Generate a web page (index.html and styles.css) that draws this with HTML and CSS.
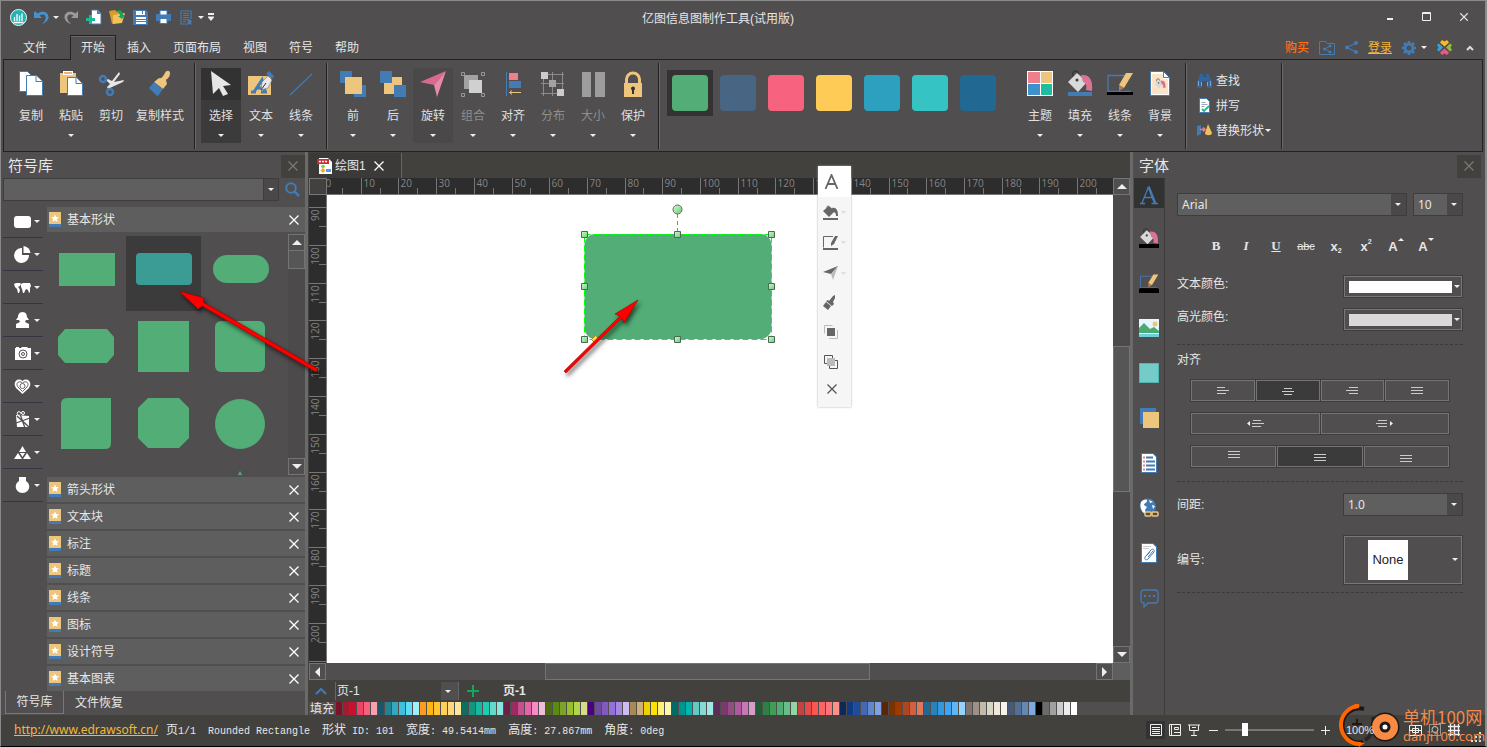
FILE: index.html
```html
<!DOCTYPE html>
<html lang="zh-CN">
<head>
<meta charset="utf-8">
<title>亿图信息图制作工具(试用版)</title>
<link rel="stylesheet" href="styles.css">
</head>
<body>
<svg class="defs" aria-hidden="true">
  <defs>
    <linearGradient id="g-handle" x1="0" y1="0" x2="1" y2="1"><stop offset="0" stop-color="#d8f8d8"/><stop offset="1" stop-color="#62cf6c"/></linearGradient>
    <symbol id="i-x" viewBox="0 0 12 12"><path d="M1.500 1.500l9 9M10.500 1.500l-9 9" fill="none" stroke="currentColor" stroke-width="1.300"/></symbol>
    <symbol id="i-lib" viewBox="0 0 12 15"><path fill="#eec57c" d="M0 0h12v12H0z"/><path fill="#437bb5" d="M0 12h12v3H0z"/><path fill="#fff" d="M6 2.500l1.200 2.400 2.700.3-2 1.800.6 2.700L6 8.400 3.500 9.700l.6-2.700-2-1.800 2.700-.3z"/></symbol>
    <symbol id="i-bucket" viewBox="0 0 26 27"><path d="M7 8c-3-4-1-7 2-7s3 4 2 9" fill="none" stroke="#35393b" stroke-width="1.400"/><path fill="#d9d9d9" d="M10 3l10 9-9 10L1 12z"/><circle cx="10" cy="10" r="1.500" fill="#3c3c3c"/><path fill="#dc7393" d="M14 5c9-1 12 5 11 16l-6-1c1-4 0-7-3-8z"/></symbol>
    <symbol id="i-pen" viewBox="0 0 26 25"><path d="M18 4.500H1v16h23" fill="none" stroke="#437bb5" stroke-width="1.300"/><path fill="#eec57c" d="M19 2h7l-9 15-5-3z"/><path fill="#b07958" d="M12 14l5 3-5 3z"/><path fill="#000" d="M0 21h26v3H0z"/></symbol>
    <symbol id="i-brush" viewBox="0 0 22 27"><path fill="#eec57c" d="M16 3c1-3 5-3 5 0 0 4-2 5-4 7l1 4-4 5-9-7 5-4c3 1 4-2 6-5z"/><path fill="#437bb5" d="M5 12l9 7-5 7-2-1-7-7z"/></symbol>
    <symbol id="i-lines" viewBox="0 0 12 8"><path d="M0 .5h12M0 3.500h12M0 6.500h12" stroke="#ccc" fill="none"/></symbol>
  </defs>
</svg>

<div class="app">
  <header class="titlebar">
    <div class="quick">
      <svg class="q-logo" width="17" height="17" viewBox="0 0 17 17"><circle cx="8.500" cy="8.500" r="8" fill="#23b3b3" stroke="#dff"/><path d="M4.500 8v4M7 5v7M9.500 6.500V12M12 4.500V12M3.500 13.500h10" stroke="#fff" stroke-width="1.300" fill="none"/></svg>
      <button class="q" aria-label="撤销"><svg width="15" height="15" viewBox="0 0 15 15"><path d="M1 2v5h5" fill="none" stroke="#4293cf" stroke-width="2"/><path d="M1 1v7h7L5.500 5.500c4-2.500 7 0 6 3.500-.5 2-2 3.500-3.500 5 4-1.500 6.500-3.500 6.500-7 0-5-6-7-11-3.500z" fill="#4293cf"/></svg></button>
      <i class="caret"></i>
      <button class="q" aria-label="重做"><svg width="15" height="15" viewBox="0 0 15 15"><path d="M14 1v7H7l2.500-2.500c-4-2.500-7 0-6 3.500.5 2 2 3.500 3.500 5C3 12.500.5 10.500.5 7c0-5 6-7 11-3.500z" fill="#9a9a9a"/></svg></button>
      <button class="q" aria-label="新建"><svg width="16" height="16" viewBox="0 0 16 16"><path fill="#fff" stroke="#437bb5" d="M5.500 1h6l3.500 3.500V15H5.500z"/><path fill="#437bb5" d="M11 1l4 4h-4z"/><path fill="#1fb896" d="M3 6h3v3h3v3H6v3H3v-3H0V9h3z"/></svg></button>
      <button class="q" aria-label="打开"><svg width="16" height="16" viewBox="0 0 16 16"><path fill="#d99b2b" d="M0 2l6-1 2 2 4-1 1 9-10 4z"/><path fill="#f1c15f" d="M4 6l12-2-3 10-9 1z"/><path fill="#13a55a" d="M7 2c4-2 7 0 7 4h2l-3 4-4-3h2c0-2-1-4-4-5z"/></svg></button>
      <button class="q" aria-label="保存"><svg width="15" height="15" viewBox="0 0 15 15"><path fill="#437bb5" d="M0 0h13l2 2v13H0z"/><path fill="#fff" d="M3 1h9v4H3zM3 7h10v7H3z"/><path d="M3 9.500h10M3 11.500h10M9.500 1v3" stroke="#437bb5"/></svg></button>
      <button class="q" aria-label="打印"><svg width="15" height="14" viewBox="0 0 15 14"><path fill="#437bb5" d="M0 4h15v7H0z"/><path fill="#fff" stroke="#437bb5" d="M4 .5h7V5H4zM4 8.500h7v5H4z"/></svg></button>
      <button class="q" aria-label="导出"><svg width="13" height="15" viewBox="0 0 13 15"><path fill="none" stroke="#437bb5" stroke-width="1.200" d="M8 14H1V1h10v8M3 3.500h6M3 5.500h6M3 7.500h6M3 9.500h4M3 11.500h3"/><path fill="#437bb5" d="M9 8l1 2 2 1-1 2 2 2-3-1-3 1 1-3-1-1z"/></svg></button>
      <i class="caret"></i>
      <button class="q q-more" aria-label="更多"><svg width="6" height="8" viewBox="0 0 6 8"><path fill="#eee" d="M0 0h6v2H0zM0 3.500h6v1L3 8 0 4.500z"/></svg></button>
    </div>
    <h1 class="title">亿图信息图制作工具(试用版)</h1>
    <div class="winbtns">
      <button aria-label="最小化"><svg width="10" height="10" viewBox="0 0 10 10"><path fill="#eee" d="M2 6h6v2H2z"/></svg></button>
      <button aria-label="最大化"><svg width="10" height="10" viewBox="0 0 10 10"><path fill="none" stroke="#eee" d="M.5 .5h8v8h-8zM.5 1.500h8"/></svg></button>
      <button aria-label="关闭"><svg width="10" height="10"><use href="#i-x"/></svg></button>
    </div>
  </header>

  <nav class="tabs">
    <button class="tab tab-file">文件</button>
    <button class="tab is-active">开始</button>
    <button class="tab">插入</button>
    <button class="tab">页面布局</button>
    <button class="tab">视图</button>
    <button class="tab">符号</button>
    <button class="tab">帮助</button>
    <div class="account">
      <a class="buy" href="#">购买</a>
      <button aria-label="共享文件夹"><svg width="16" height="14" viewBox="0 0 16 14"><path d="M.5 13.500V.5H7l1 2h7.500v11z" fill="none" stroke="#437bb5"/><path d="M11 5L6 8l5 3" fill="none" stroke="#437bb5"/><circle cx="11" cy="5" r="1.500" fill="#437bb5"/><circle cx="5.500" cy="8" r="1.500" fill="#437bb5"/><circle cx="11" cy="11" r="1.500" fill="#437bb5"/></svg></button>
      <button aria-label="分享"><svg width="13" height="13" viewBox="0 0 13 13"><path d="M11 2L2 6.500 11 11" fill="none" stroke="#437bb5" stroke-width="1.200"/><circle cx="11" cy="2" r="2" fill="#437bb5"/><circle cx="2" cy="6.500" r="2" fill="#437bb5"/><circle cx="11" cy="11" r="2" fill="#437bb5"/></svg></button>
      <a class="login" href="#">登录</a>
      <button aria-label="设置"><svg width="14" height="14" viewBox="0 0 14 14"><circle cx="7" cy="7" r="4" fill="none" stroke="#437bb5" stroke-width="3"/><path d="M7 0v2.500M7 11.500V14M0 7h2.500M11.500 7H14M2 2l2 2M10 10l2 2M12 2l-2 2M4 10l-2 2" stroke="#437bb5" stroke-width="2.500"/></svg></button>
      <i class="caret"></i>
      <button class="clover" aria-label="社区"><svg width="15" height="15" viewBox="0 0 15 15"><path fill="#f9b92c" d="M7.500 6.500L3 2.500 5 0l2.500 1.500L10 0l2 2.500z"/><path fill="#e65a8a" d="M7.500 8.500L3 12.500 5 15l2.500-1.500L10 15l2-2.500z"/><path fill="#35a3d7" d="M6 7.500L2 3.500 0 5l1.500 2.500L0 10l2 1.500z"/><path fill="#8fbf3c" d="M9 7.500l4-4L15 5l-1.500 2.500L15 10l-2 1.500z"/></svg></button>
      <button aria-label="折叠功能区"><svg width="8" height="6" viewBox="0 0 8 6"><path d="M1 5l3-3 3 3" fill="none" stroke="#ddd" stroke-width="2"/></svg></button>
    </div>
  </nav>

  <section class="ribbon">
    <div class="group">
      <button class="rb"><svg width="26" height="27" viewBox="0 0 26 27"><g fill="#fff" stroke="#437bb5"><path d="M1.500 1.500h8l5 5v15h-13z"/><path d="M8.500 5.500h10l6 6v14h-16z"/><path d="M18 5.500v6h6.500"/></g></svg><span>复制</span></button>
      <button class="rb"><svg width="26" height="27" viewBox="0 0 26 27"><path fill="#eec57c" d="M2 3h16v20H2z"/><path fill="#fff" d="M5 1h10v4H5z"/><path fill="#f3b179" d="M6 2h8v2H6z"/><g fill="#fff" stroke="#437bb5"><path d="M9.500 7.500h9l6 6v12h-15z"/><path d="M18 7.500v6h6"/></g></svg><span>粘贴</span><i class="caret"></i></button>
      <button class="rb"><svg width="26" height="27" viewBox="0 0 26 27"><path fill="#e8e8e8" d="M21 2l1 2-6 8 10-2-1 2-11 5-4 2-1-2 3-3-4-4 2-1 4 2z"/><circle cx="5" cy="9" r="3" fill="none" stroke="#437bb5" stroke-width="2.500"/><circle cx="12" cy="22" r="3" fill="none" stroke="#437bb5" stroke-width="2.500"/></svg><span>剪切</span></button>
      <button class="rb rb-wide"><svg width="22" height="27"><use href="#i-brush"/></svg><span>复制样式</span></button>
    </div>
    <div class="group">
      <button class="rb is-on"><svg width="26" height="27" viewBox="0 0 26 27"><path fill="#e6e6e6" d="M3 1l20 14-8 1 5 8-5 2-4-8-6 6z"/></svg><span>选择</span><i class="caret"></i></button>
      <button class="rb"><svg width="26" height="27" viewBox="0 0 26 27"><path fill="#eec57c" d="M0 6h23v19H0z"/><path fill="none" stroke="#437bb5" stroke-width="3" d="M3 22h5M6 22l8-12 3 12M9 18h8M13 22h6"/><path fill="#e9e9e9" stroke="#777" stroke-width=".6" d="M13 20l1-8 6-6 4 4-4 8z"/><path d="M13 20l5-7" stroke="#333"/><path fill="#437bb5" d="M18 4l3-3 5 5-2 3z"/></svg><span>文本</span><i class="caret"></i></button>
      <button class="rb"><svg width="26" height="27" viewBox="0 0 26 27"><path d="M2 25L24 4" stroke="#437bb5" stroke-width="1.200"/></svg><span>线条</span><i class="caret"></i></button>
    </div>
    <div class="group">
      <button class="rb"><svg width="26" height="27" viewBox="0 0 26 27"><path fill="#437bb5" d="M0 1h12v12H0zM14 15h12v12H14z"/><path fill="#eec57c" d="M5 7h17v17H5z"/></svg><span>前</span><i class="caret"></i></button>
      <button class="rb"><svg width="26" height="27" viewBox="0 0 26 27"><path fill="#eec57c" d="M4 7h18v17H4z"/><path fill="#437bb5" d="M0 1h12v12H0zM14 15h12v12H14z"/></svg><span>后</span><i class="caret"></i></button>
      <button class="rb is-hover"><svg width="26" height="27" viewBox="0 0 26 27"><path fill="#d96a8e" d="M0 12L26 1 14 15z"/><path fill="#e78ba8" d="M26 1l-9 26-3-12z"/></svg><span>旋转</span><i class="caret"></i></button>
      <button class="rb" disabled><svg width="26" height="27" viewBox="0 0 26 27"><path fill="#a2a2a2" d="M4 5h14v14H4z"/><path fill="#d0d0d0" d="M9 10h13v13H9z"/><g fill="none" stroke="#999"><path d="M1.500 2.500h3v3h-3zM21.500 2.500h3v3h-3zM1.500 23.500h3v3h-3zM21.500 23.500h3v3h-3z"/></g></svg><span>组合</span><i class="caret"></i></button>
      <button class="rb"><svg width="26" height="27" viewBox="0 0 26 27"><path d="M6.500 2v24" stroke="#437bb5"/><path fill="#f07f8d" d="M9 3h9v7H9z"/><path fill="#437bb5" d="M9 11h12v7H9z"/><path fill="none" stroke="#eec57c" d="M21 22.500H10M12 20.500l-2.500 2 2.500 2"/></svg><span>对齐</span><i class="caret"></i></button>
      <button class="rb" disabled><svg width="26" height="27" viewBox="0 0 26 27"><path d="M1 4.500h23M1 13.500h23M1 23.500h23M3.500 2v24M12.500 2v24M22.500 2v24" stroke="#8c8c8c"/><path fill="#ccc" d="M1 2h7v7H1zM17 19h7v7h-7z"/><path fill="#a2a2a2" d="M9 10h7v7H9z"/></svg><span>分布</span><i class="caret"></i></button>
      <button class="rb" disabled><svg width="26" height="27" viewBox="0 0 26 27"><path fill="#9d9d9d" d="M2 2h9v25H2zM15 2h10v25H15z"/></svg><span>大小</span><i class="caret"></i></button>
      <button class="rb"><svg width="26" height="27" viewBox="0 0 26 27"><path d="M6.500 13V9.500a6.500 6.500 0 0 1 13 0V13" fill="none" stroke="#eec57c" stroke-width="3"/><path fill="#eec57c" d="M4 13h18v14H4z"/><path d="M13 17v7" stroke="#333" stroke-width="2"/><circle cx="13" cy="18.500" r="2" fill="#333"/></svg><span>保护</span><i class="caret"></i></button>
    </div>
    <div class="group styles">
      <button class="style s1 is-on" aria-label="样式 1"><i></i></button>
      <button class="style s2" aria-label="样式 2"><i></i></button>
      <button class="style s3" aria-label="样式 3"><i></i></button>
      <button class="style s4" aria-label="样式 4"><i></i></button>
      <button class="style s5" aria-label="样式 5"><i></i></button>
      <button class="style s6" aria-label="样式 6"><i></i></button>
      <button class="style s7" aria-label="样式 7"><i></i></button>
      <div class="themes">
        <button class="rb"><svg width="26" height="27" viewBox="0 0 26 27"><path fill="#fff" d="M0 1h26v25H0z"/><path fill="#f07f8d" d="M1 2h12v11H1z"/><path fill="#eec57c" d="M14 2h11v11H14z"/><path fill="#3f91cc" d="M1 14h12v11H1z"/><path fill="#1fbc9f" d="M14 14h11v11H14z"/></svg><span>主题</span><i class="caret"></i></button>
        <button class="rb"><svg width="26" height="27" viewBox="0 0 26 27"><use href="#i-bucket" width="26" height="27"/><path fill="#437bb5" d="M1 22h24v4H1z"/></svg><span>填充</span><i class="caret"></i></button>
        <button class="rb"><svg width="26" height="27" viewBox="0 0 26 25"><use href="#i-pen" width="26" height="25"/></svg><span>线条</span><i class="caret"></i></button>
        <button class="rb"><svg width="26" height="27" viewBox="0 0 26 27"><path fill="#fff" stroke="#437bb5" d="M3.500 1.500h13l6 6v18h-19z"/><path fill="#fbe3c8" d="M5 4h11v5h5v15H5z"/><path d="M16.500 1.500v6h6" fill="none" stroke="#437bb5"/><use href="#i-bucket" x="7" y="8" width="12" height="13"/></svg><span>背景</span><i class="caret"></i></button>
      </div>
    </div>
    <div class="group stack">
      <button><svg width="15" height="15" viewBox="0 0 15 15"><path fill="#2f66a0" d="M3 1h3v3h3V1h3l1 4 2 4v6h-5V8H5v7H0V9l2-4z"/><path d="M1.500 8v5M4.500 9v4M10.500 9v4M13.500 8v5" stroke="#9fbfe0" stroke-width=".7"/></svg>查找</button>
      <button><svg width="15" height="15" viewBox="0 0 15 15"><path fill="#fff" stroke="#437bb5" d="M2.500.5h7l3 3v11h-10z"/><path d="M4.500 4.500h4M4.500 6.500h6M4.500 8.500h3" stroke="#9ab"/><path d="M5 11l2 2 5-5" stroke="#1fb896" stroke-width="1.800" fill="none"/></svg>拼写</button>
      <button><svg width="15" height="15" viewBox="0 0 15 15"><path fill="#437bb5" d="M0 3l4-1v9l-4 2z"/><path d="M3 6.500h5M6 4.500l2 2-2 2" stroke="#f07f8d" stroke-width="1.500" fill="none"/><path fill="#eec057" d="M11 1l4 9c0 3-7 3-7 0z"/></svg>替换形状<i class="caret"></i></button>
    </div>
  </section>

  <main class="work">
    <aside class="library">
      <div class="panel-head"><h2>符号库</h2><button class="panel-close" aria-label="关闭符号库"><svg width="12" height="12"><use href="#i-x"/></svg></button></div>
      <div class="search">
        <input type="text" aria-label="搜索符号"><button class="search-drop" aria-label="搜索历史"><i class="caret"></i></button>
        <button class="search-go" aria-label="搜索"><svg width="15" height="15" viewBox="0 0 15 15"><circle cx="6" cy="6" r="4.800" fill="none" stroke="#437bb5" stroke-width="2"/><path d="M9.500 9.500L14 14" stroke="#437bb5" stroke-width="2.500"/></svg></button>
      </div>
      <div class="lib-body">
        <div class="cats">
          <button aria-label="形状"><svg width="17" height="17" viewBox="0 0 17 17"><rect y="3" width="17" height="12" rx="3" fill="#fff"/></svg><i class="caret"></i></button>
          <button aria-label="图表"><svg width="17" height="17" viewBox="0 0 17 17"><path fill="#fff" d="M8 2v7h7a7.500 7.500 0 1 1-7-7z"/><path fill="#fff" d="M9.500 0a7.500 7.500 0 0 1 7 7h-7z"/></svg><i class="caret"></i></button>
          <button aria-label="地图"><svg width="17" height="17" viewBox="0 0 17 17"><path fill="#fff" d="M0 5l2-1h4l1 1-1 2-2 1 1 1 1 2-1 3H4l-1-4-2-2zM7 5l2-1 7 0 1 3-1 2 0 4-1 1-1-3-2-1-1 2-1 2H9L8 10 7 8z"/></svg><i class="caret"></i></button>
          <button aria-label="人物"><svg width="17" height="17" viewBox="0 0 17 17"><path fill="#fff" d="M8.500 0C12 0 13 3 13 5l2 3h-3l-1 2 4 2v4H2v-4l4-2-1-2H2l2-3c0-2 1-5 4.500-5z"/></svg><i class="caret"></i></button>
          <button aria-label="科技"><svg width="17" height="17" viewBox="0 0 17 17"><path fill="#fff" d="M2 2h3v1h2l1-1h5l1 1h3v12H1V3h1z"/><circle cx="9" cy="9" r="4" fill="none" stroke="#555"/><circle cx="9" cy="9" r="1.500" fill="none" stroke="#555"/></svg><i class="caret"></i></button>
          <button aria-label="健康"><svg width="17" height="17" viewBox="0 0 17 17"><path fill="#fff" d="M8.500 16L2 10C-2 4 4-1 8.500 3 13-1 19 4 15 10z"/><path fill="none" stroke="#666" d="M8.500 13.500L4 9c-3-4 1-7 4.500-4C12 2 16 5 13 9z"/><circle cx="8.500" cy="8" r="2.500" fill="none" stroke="#666"/></svg><i class="caret"></i></button>
          <button aria-label="礼物"><svg width="17" height="17" viewBox="0 0 17 17"><path fill="#fff" d="M2 4l13 1v11H3z"/><circle cx="5" cy="2.500" r="1.800" fill="none" stroke="#fff"/><circle cx="9" cy="2" r="1.500" fill="none" stroke="#fff"/><path d="M6 3l5 14M2 12L16 7M3 5l12 11" stroke="#504e4f" stroke-width="1.300"/></svg><i class="caret"></i></button>
          <button aria-label="三角"><svg width="17" height="17" viewBox="0 0 17 17"><path fill="#fff" d="M8.500 2L12 8H5zM4 9l4 6H0zM13 9l4 6H9zM6 9h5l-2.500 4z"/></svg><i class="caret"></i></button>
          <button aria-label="灯泡"><svg width="17" height="17" viewBox="0 0 17 17"><path fill="#fff" d="M5 0h7v4c6 4 3 12-3.500 12S-1 8 5 4z"/></svg><i class="caret"></i></button>
        </div>
        <div class="libs">
          <div class="lib"><svg width="12" height="15"><use href="#i-lib"/></svg><span>基本形状</span><button aria-label="关闭基本形状"><svg width="12" height="12"><use href="#i-x"/></svg></button></div>
          <div class="shapes">
            <div class="shape-grid">
              <button aria-label="矩形"><svg viewBox="0 0 75 75"><path d="M10 17h56v33H10z"/></svg></button>
              <button class="is-on" aria-label="圆角矩形"><svg viewBox="0 0 75 75"><rect x="10" y="17" width="56" height="32" rx="4"/></svg></button>
              <button aria-label="胶囊形"><svg viewBox="0 0 75 75"><rect x="10" y="19" width="56" height="28" rx="14"/></svg></button>
              <button aria-label="切角矩形"><svg viewBox="0 0 75 75"><path d="M16 16h42l7 8v18l-7 8H16l-7-8V24z"/></svg></button>
              <button aria-label="正方形"><svg viewBox="0 0 75 75"><path d="M12 8h51v51H12z"/></svg></button>
              <button aria-label="圆角正方形"><svg viewBox="0 0 75 75"><rect x="12" y="8" width="50" height="51" rx="6"/></svg></button>
              <button aria-label="对角圆角"><svg viewBox="0 0 75 75"><path d="M18 8h44v45q0 6-6 6H12V14q0-6 6-6z"/></svg></button>
              <button aria-label="八边形"><svg viewBox="0 0 75 75"><path d="M22 8h31l10 10v30L53 58H22L12 48V18z"/></svg></button>
              <button aria-label="圆形"><svg viewBox="0 0 75 75"><circle cx="37" cy="34" r="25"/></svg></button>
              <i></i><i></i>
              <button aria-label="三角形"><svg viewBox="0 0 75 75"><path d="M37 4l30 60H7z"/></svg></button>
            </div>
            <div class="vbar">
              <button class="sb" aria-label="向上"><i class="up"></i></button><span class="thumb lib-thumb"></span><span class="fill"></span><button class="sb" aria-label="向下"><i class="down"></i></button>
            </div>
          </div>
          <div class="lib"><svg width="12" height="15"><use href="#i-lib"/></svg><span>箭头形状</span><button aria-label="关闭箭头形状"><svg width="12" height="12"><use href="#i-x"/></svg></button></div>
          <div class="lib"><svg width="12" height="15"><use href="#i-lib"/></svg><span>文本块</span><button aria-label="关闭文本块"><svg width="12" height="12"><use href="#i-x"/></svg></button></div>
          <div class="lib"><svg width="12" height="15"><use href="#i-lib"/></svg><span>标注</span><button aria-label="关闭标注"><svg width="12" height="12"><use href="#i-x"/></svg></button></div>
          <div class="lib"><svg width="12" height="15"><use href="#i-lib"/></svg><span>标题</span><button aria-label="关闭标题"><svg width="12" height="12"><use href="#i-x"/></svg></button></div>
          <div class="lib"><svg width="12" height="15"><use href="#i-lib"/></svg><span>线条</span><button aria-label="关闭线条"><svg width="12" height="12"><use href="#i-x"/></svg></button></div>
          <div class="lib"><svg width="12" height="15"><use href="#i-lib"/></svg><span>图标</span><button aria-label="关闭图标"><svg width="12" height="12"><use href="#i-x"/></svg></button></div>
          <div class="lib"><svg width="12" height="15"><use href="#i-lib"/></svg><span>设计符号</span><button aria-label="关闭设计符号"><svg width="12" height="12"><use href="#i-x"/></svg></button></div>
          <div class="lib"><svg width="12" height="15"><use href="#i-lib"/></svg><span>基本图表</span><button aria-label="关闭基本图表"><svg width="12" height="12"><use href="#i-x"/></svg></button></div>
        </div>
      </div>
      <div class="lib-tabs"><button class="is-active">符号库</button><button>文件恢复</button></div>
    </aside>

    <section class="editor">
      <div class="doc-tabs">
        <div class="doc-tab"><svg width="15" height="16" viewBox="0 0 15 16"><path fill="#fff" d="M2 0h9l4 4v12H2z"/><path fill="#c5303a" d="M0 1h12v5H0z"/><path d="M2 3.500h2M5 3.500h2M8 3.500h2" stroke="#fff" stroke-width="1.500"/><circle cx="6" cy="8.500" r="1.800" fill="#8fc843"/><path fill="#4aa0f0" d="M9 11h5v3H9z"/><path fill="#f5a623" d="M6 10l2.500 2.500L6 15l-2.500-2.500z"/></svg><span>绘图1</span><button aria-label="关闭绘图1"><svg width="12" height="12"><use href="#i-x"/></svg></button></div>
      </div>
      <div class="sheet">
        <div class="corner"></div>
        <svg class="ruler-h" id="ruler-h"></svg>
        <svg class="ruler-v" id="ruler-v"></svg>
        <div class="stage">
          <svg class="drawing" width="260" height="170" viewBox="0 0 260 170">
            <rect x="27.500" y="30" width="187" height="105" rx="11" fill="#52ad77"/>
            <rect x="27.500" y="30.500" width="187" height="105" fill="none" stroke="#0f0" stroke-dasharray="6 3"/>
            <path d="M120.500 10v20" stroke="#0e0" stroke-dasharray="4 3"/>
            <circle cx="120.500" cy="5.500" r="4.500" fill="url(#g-handle)" stroke="#666"/>
            <path d="M38.500 131.500l4 4-4 4-4-4z" fill="#fd4" stroke="#a82"/>
            <g fill="url(#g-handle)" stroke="#4a6a52">
              <path d="M24.500 27.500h6v6h-6z"/><path d="M117.500 27.500h6v6h-6z"/><path d="M211.500 27.500h6v6h-6z"/>
              <path d="M24.500 79.500h6v6h-6z"/><path d="M211.500 79.500h6v6h-6z"/>
              <path d="M24.500 132.500h6v6h-6z"/><path d="M117.500 132.500h6v6h-6z"/><path d="M211.500 132.500h6v6h-6z"/>
            </g>
          </svg>
        </div>
        <div class="vbar sheet-v">
          <button class="sb" aria-label="向上"><i class="up"></i></button><span class="gap-a"></span><span class="thumb"></span><span class="gap-b"></span><button class="sb" aria-label="向下"><i class="down"></i></button>
        </div>
        <div class="hbar">
          <button class="sb" aria-label="向左"><i class="left"></i></button><span class="gap-a"></span><span class="thumb"></span><span class="gap-b"></span><button class="sb" aria-label="向右"><i class="right"></i></button>
        </div>
        <div class="bar-corner"></div>
      </div>
      <div class="pagebar">
        <button class="pg-up" aria-label="展开"><svg width="12" height="8" viewBox="0 0 12 8"><path d="M1 7l5-5 5 5" fill="none" stroke="#437bb5" stroke-width="2"/></svg></button>
        <div class="pg-pick"><select aria-label="页面"><option>页-1</option></select><i class="caret"></i></div>
        <button class="pg-add" aria-label="添加页"><svg width="12" height="12" viewBox="0 0 12 12"><path d="M6 0v12M0 6h12" stroke="#12a85a" stroke-width="2"/></svg></button>
        <button class="pg-tab">页-1</button>
      </div>
      <div class="palette"><span>填充</span><div class="chips" id="chips"></div></div>

      <div class="floatbar">
        <button aria-label="字体"><svg width="15" height="15" viewBox="0 0 15 15"><path d="M1.500 15L7.500 1l6 14M4 10h7" fill="none" stroke="#666" stroke-width="1.800"/></svg></button>
        <button aria-label="填充"><svg width="23" height="15" viewBox="0 0 23 15"><path fill="#666" d="M6 1l6 5-6 6-6-6z"/><path d="M4 4c-1-4 3-4 3 1" stroke="#666" fill="none"/><path fill="#666" d="M9 3c5-1 6 3 6 8h-2c0-3-1-4-3-4zM0 13h15v2H0z"/><path fill="#ddd" d="M18 6h5l-2.500 3z"/></svg></button>
        <button aria-label="线条"><svg width="23" height="15" viewBox="0 0 23 15"><path d="M10 1.500H.5v11" fill="none" stroke="#666"/><path fill="#666" d="M12 1h3l-4 8-3 2v-3zM0 13h15v2H0z"/><path fill="#ddd" d="M18 6h5l-2.500 3z"/></svg></button>
        <button aria-label="旋转"><svg width="23" height="15" viewBox="0 0 23 15"><path fill="#666" d="M0 7l15-6-7 8z"/><path fill="#bbb" d="M15 1l-5 14-2-6z"/><path fill="#ddd" d="M18 7h5l-2.500 3z"/></svg></button>
        <button aria-label="格式刷"><svg width="13" height="15" viewBox="0 0 13 15"><path fill="#666" d="M10 1l2-1v3l-2 4 1 2-2 2-6-5 2-1 1 1zM3 7l5 4-3 4-5-4z"/></svg></button>
        <button aria-label="置于顶层"><svg width="14" height="14" viewBox="0 0 14 14"><path fill="none" stroke="#bbb" d="M.5 8.500v-8h8M13.500 5v8.500H5"/><path fill="#666" d="M3 3h8v8H3z"/></svg></button>
        <button aria-label="置于底层"><svg width="14" height="14" viewBox="0 0 14 14"><path fill="#bbb" d="M3 3h8v8H3z"/><path fill="none" stroke="#555" d="M3 8.500H.5v-8h8V3M11 5.500h2.500v8h-8V11"/></svg></button>
        <button class="fl-close" aria-label="关闭"><svg width="12" height="12"><use href="#i-x"/></svg></button>
      </div>
    </section>

    <aside class="props">
      <div class="panel-head"><h2>字体</h2><button class="panel-close" aria-label="关闭字体"><svg width="12" height="12"><use href="#i-x"/></svg></button></div>
      <div class="props-body">
        <div class="side-icons">
          <button class="is-on" aria-label="字体"><svg width="20" height="20" viewBox="0 0 20 20"><path d="M3 18L9.500 2M5.500 12.500h8" fill="none" stroke="#437bb5" stroke-width="1.300"/><path d="M9.500 1.500L16 18" stroke="#437bb5" stroke-width="2.500"/><path d="M1 18.500h5M12.500 18.500H19" stroke="#437bb5" stroke-width="1.500"/></svg></button>
          <button aria-label="填充"><svg width="20" height="20" viewBox="0 0 20 20"><use href="#i-bucket" width="20" height="20"/><path d="M0 16h20v4H0z"/></svg></button>
          <button aria-label="线条"><svg width="20" height="20" viewBox="0 0 20 20"><use href="#i-pen" width="20" height="18"/><path d="M0 16h20v4H0z"/></svg></button>
          <button aria-label="图片"><svg width="20" height="18" viewBox="0 0 20 18"><path fill="#e9f5fc" d="M0 0h20v18H0z"/><circle cx="16" cy="5" r="2.500" fill="#eec57c"/><path fill="#49ab72" d="M0 14V9l5-5 6 6 4-2 5 4v2z"/><path fill="#6fd0dc" d="M0 15h20v3H0z"/></svg></button>
          <button aria-label="底色"><svg width="20" height="20" viewBox="0 0 20 20"><path fill="#74cbc8" stroke="#4fb8b4" d="M.5 .5h19v19H.5z"/></svg></button>
          <button aria-label="图层"><svg width="20" height="20" viewBox="0 0 20 20"><path fill="#437bb5" d="M1 0h16v16H1z"/><path fill="#eec57c" d="M4 4h16v16H4z"/></svg></button>
          <button aria-label="属性"><svg width="16" height="20" viewBox="0 0 16 20"><path fill="#fff" stroke="#437bb5" d="M.5 .5H12l3.500 3.500v15.500H.5z"/><path d="M5 4.500h7M5 8.500h9M5 12.500h9M5 16.500h9" stroke="#437bb5" stroke-width="2"/><path d="M2 4.500h2M2 8.500h2M2 12.500h2M2 16.500h2" stroke="#f07f8d" stroke-width="2"/></svg></button>
          <button aria-label="链接"><svg width="20" height="20" viewBox="0 0 20 20"><circle cx="9" cy="8.500" r="8" fill="#437bb5"/><path fill="#fff" d="M2 4c3-3 6-3 6-1S5 5 5 7l3 2-2 3 1 4C3 15 0 9 2 4zM10 2l4 2-3 1zM13 7l3 1-2 3z"/><g fill="#504e4f" stroke="#eec57c" stroke-width="1.500"><rect x="6" y="14" width="6" height="4" rx="1"/><rect x="13" y="14" width="6" height="4" rx="1"/></g></svg></button>
          <button aria-label="附件"><svg width="16" height="20" viewBox="0 0 16 20"><path fill="#fff" stroke="#437bb5" d="M.5 .5H12l3.500 3.500v15.500H.5z"/><path d="M2 3.500h8M2 5.500h6" stroke="#ccc"/><path d="M5 13l5-6c2-2 4 0 3 2l-6 7c-2 2-4 0-3-2l5-5M7 14l5-6" fill="none" stroke="#437bb5"/></svg></button>
          <button aria-label="批注"><svg width="19" height="19" viewBox="0 0 19 19"><path d="M4 1h11q3 0 3 3v7q0 3-3 3H8l-4 4v-4q-3 0-3-3V4q0-3 3-3z" fill="none" stroke="#437bb5" stroke-width="1.300"/><path d="M4 7h2M8.500 7h2M13 7h2" stroke="#437bb5" stroke-width="2"/></svg></button>
        </div>
        <form class="form">
          <div class="row fonts">
            <div class="combo combo-font"><select aria-label="字体名称"><option>Arial</option></select><i class="caret"></i></div>
            <div class="combo combo-size"><select aria-label="字号"><option>10</option></select><i class="caret"></i></div>
          </div>
          <div class="row formats">
            <button type="button" class="f-b">B</button><button type="button" class="f-i">I</button><button type="button" class="f-u">U</button><button type="button" class="f-s">abc</button><button type="button" class="f-x">x<sub>2</sub></button><button type="button" class="f-x">x<sup>2</sup></button>
            <button type="button" class="f-a">A<i class="tri-up"></i></button><button type="button" class="f-a">A<i class="tri-down"></i></button>
          </div>
          <div class="row pair colors"><label for="txt-color">文本颜色:</label><button type="button" id="txt-color" class="color"><i class="chip-white"></i><i class="caret"></i></button></div>
          <div class="row pair colors"><label for="hl-color">高光颜色:</label><button type="button" id="hl-color" class="color"><i class="chip-grey"></i><i class="caret"></i></button></div>
          <fieldset class="align">
            <legend>对齐</legend>
            <div class="seg">
              <button type="button" aria-label="左对齐"><svg width="12" height="8" viewBox="0 0 12 8"><path d="M0 .5h8M0 3.500h12M0 6.500h9" stroke="#ccc"/></svg></button>
              <button type="button" class="is-on" aria-label="居中"><svg width="12" height="8" viewBox="0 0 12 8"><path d="M2 .5h8M0 3.500h12M2 6.500h8" stroke="#ccc"/></svg></button>
              <button type="button" aria-label="右对齐"><svg width="12" height="8" viewBox="0 0 12 8"><path d="M3 .5h9M0 3.500h12M3 6.500h9" stroke="#ccc"/></svg></button>
              <button type="button" aria-label="两端对齐"><svg width="12" height="8"><use href="#i-lines"/></svg></button>
            </div>
            <div class="seg">
              <button type="button" aria-label="减少缩进"><svg width="17" height="8" viewBox="0 0 17 8"><path fill="#eee" d="M3 1v5L0 3.500z"/><path d="M6 .5h8M5 3.500h12M5 6.500h9" stroke="#ccc"/></svg></button>
              <button type="button" aria-label="增加缩进"><svg width="17" height="8" viewBox="0 0 17 8"><path fill="#eee" d="M14 1v5l3-2.500z"/><path d="M2 .5h9M0 3.500h11M2 6.500h9" stroke="#ccc"/></svg></button>
            </div>
            <div class="seg">
              <button type="button" class="v-top" aria-label="顶端对齐"><svg width="12" height="8"><use href="#i-lines"/></svg></button>
              <button type="button" class="is-on" aria-label="垂直居中"><svg width="12" height="8"><use href="#i-lines"/></svg></button>
              <button type="button" class="v-bottom" aria-label="底端对齐"><svg width="12" height="8"><use href="#i-lines"/></svg></button>
            </div>
          </fieldset>
          <div class="row pair spacing"><label for="spacing">间距:</label><div class="combo"><select id="spacing"><option>1.0</option></select><i class="caret"></i></div></div>
          <div class="row pair numbering"><label for="numbering">编号:</label><button type="button" id="numbering" class="bullet"><b>None</b><i class="caret"></i></button></div>
        </form>
      </div>
    </aside>
  </main>

  <footer class="status">
    <a href="#">http://www.edrawsoft.cn/</a>
    <span>页<code>1/1</code></span>
    <span><code>Rounded Rectangle</code></span>
    <span>形状<code> ID: 101</code></span>
    <span>宽度<code>: 49.5414mm</code></span>
    <span>高度<code>: 27.867mm</code></span>
    <span>角度<code>: 0deg</code></span>
    <div class="zoom">
      <button class="is-on" aria-label="普通视图"><svg width="12" height="12" viewBox="0 0 12 12"><path fill="none" stroke="#eee" d="M.5 .5h11v11H.5zM2 3.500h8M2 5.500h8M2 7.500h8M2 9.500h8"/></svg></button>
      <button aria-label="页面视图"><svg width="12" height="12" viewBox="0 0 12 12"><path fill="none" stroke="#eee" d="M.5 .5h11v11H.5zM2.500 0v12M5.500 3.500h4v2h-4zM5 8.500h6"/></svg></button>
      <button aria-label="放映"><svg width="12" height="12" viewBox="0 0 12 12"><path fill="none" stroke="#eee" d="M0 1h12M1.500 1v5.500h9V1M6 7v4M3 11.500h6M4 3.500h4"/></svg></button>
      <button class="zm" aria-label="缩小"><svg width="9" height="9" viewBox="0 0 9 9"><path d="M0 4.500h9" stroke="#eee"/></svg></button>
      <input type="range" min="0" max="100" value="21" aria-label="缩放">
      <button class="zm" aria-label="放大"><svg width="9" height="9" viewBox="0 0 9 9"><path d="M0 4.500h9M4.500 0v9" stroke="#eee"/></svg></button>
      <span class="pct">100%</span>
      <button class="z-fit" aria-label="适合页面"><svg width="13" height="11" viewBox="0 0 13 11"><path fill="none" stroke="#eee" d="M.5 .5h12v10H.5zM3.500 3.500h6v4h-6zM6.500 1v9M1 5.500h11"/></svg></button>
      <button aria-label="选择区域"><svg width="12" height="12" viewBox="0 0 12 12"><path d="M.5 .5h11v11H.5z" fill="none" stroke="#eee" stroke-dasharray="1 1"/><circle cx="6" cy="5.500" r="3" fill="none" stroke="#ccc"/></svg></button>
      <button aria-label="网格"><svg width="12" height="12" viewBox="0 0 12 12"><path d="M0 2.500h12M0 6.500h12M0 10.500h12M2.500 0v12M6.500 0v12M10.500 0v12" stroke="#eee" stroke-width="1.300"/></svg></button>
      <svg class="grip" width="11" height="11" viewBox="0 0 11 11"><path fill="#ddd" d="M8 0h2v2H8zM4 4h2v2H4zM8 4h2v2H8zM0 8h2v2H0zM4 8h2v2H4zM8 8h2v2H8z"/></svg>
    </div>
  </footer>
</div>

<svg class="notes" width="660" height="400" viewBox="0 0 660 400" aria-hidden="true">
  <g fill="#f00" stroke="#a00000" stroke-width=".6">
    <path d="M179 291l25 7-1 4 115 67-2 3-114-66-4 3z"/>
    <path d="M638 300l-14 23-2-5-56 55-2-2 56-55-5-2z"/>
  </g>
</svg>

<div class="mark">
  <svg width="64" height="44" viewBox="0 0 64 44" aria-hidden="true">
    <path d="M25 6A17 17 0 1 0 24 39" fill="none" stroke="#1c1817" stroke-width="4"/>
    <path d="M20 3A19 19 0 0 0 22 41" fill="none" stroke="#f60" stroke-width="4"/>
    <path d="M13 3q5-4 8 0l-5 3zM17 39l9 1-6 4z" fill="#f60"/>
    <path d="M18 16v10M13 21h10" stroke="#1c1817" stroke-width="2"/>
    <path d="M34 14c2 9 0 18-8 23" fill="none" stroke="#2c2522" stroke-width="4"/>
    <circle cx="46" cy="24" r="14.500" fill="#1c1817"/><circle cx="46" cy="24" r="13" fill="#f98a43"/><circle cx="46" cy="24" r="4" fill="#fff" stroke="#1c1817" stroke-width="3"/>
  </svg>
  <p><b>单机100网</b><span>danji100.com</span></p>
</div>
<script src="app.js"></script>
</body>
</html>
```

FILE: styles.css
```css
* { box-sizing: border-box; }
html, body { height: 100%; }
body { margin: 0; position: relative; overflow: hidden; background: #504e4f; color: #e6e6e6; font: 12px/16px "Liberation Sans", "Noto Sans CJK SC", sans-serif; }
button, input, select { font: inherit; color: inherit; margin: 0; padding: 0; border: 0; background: none; border-radius: 0; }
button { display: flex; align-items: center; justify-content: center; }
h1, h2, p { margin: 0; font-weight: 400; }
svg { display: block; flex: none; }
.defs { position: absolute; width: 0; height: 0; }
.caret { display: block; flex: none; width: 0; height: 0; border: 3px solid transparent; border-top-color: #eee; border-bottom: 0; }

.app { display: flex; flex-direction: column; height: 100%; border: solid #8a8a8a; border-width: 1px 2px 1px 1px; border-bottom-color: #000; }

.titlebar { display: grid; grid-template-columns: 1fr auto 1fr; align-items: center; height: 32px; padding-left: 9px; padding-right: 16px; }
.quick { display: flex; align-items: center; gap: 5px; }
.quick .caret { margin: 0 -2px; }
.q { width: 18px; height: 18px; }
.q-more { width: 8px; }
.title { font-size: 12px; line-height: 16px; padding: 4px 43px 0 0; }
.winbtns { display: flex; justify-content: flex-end; gap: 27px; }

.tabs { display: flex; height: 27px; padding-left: 11px; align-items: stretch; padding-top: 2px; margin-bottom: -1px; position: relative; }
.tab { padding: 0 11px; }
.tab-file { margin-right: 12px; }
.tab.is-active { border: 1px solid #222; border-bottom: 0; padding: 0 10px; background: #504e4f; box-shadow: inset 0 1px #6a6a6a; }
.account { display: flex; align-items: center; gap: 10px; margin-left: auto; padding-right: 11px; }
.account a { line-height: 14px; }
.account .caret { margin: 0 0 0 -5px; }
.buy { color: #ff7210; font-weight: 500; text-decoration: none; }
.login { color: #f5b43a; }
.account .clover { margin-right: 4px; }

.ribbon { display: flex; flex: none; height: 93px; margin: 0 2px; border: 1px solid #222; padding: 3px 0 2px 1px; }
.group { display: flex; padding: 5px 5px 0 6px; border-right: 1px solid #222; box-shadow: 1px 0 #6a6a6a; }
.group:first-child { padding-right: 5px; }
.rb { flex-direction: column; justify-content: flex-start; width: 40px; height: 75px; padding-top: 2px; color: #e0e0e0; }
.rb span { line-height: 16px; margin: 11px 0 10px; white-space: nowrap; }
.rb-wide { width: 58px; }
.rb:disabled { color: #8e8e8e; }
.rb.is-on { background: linear-gradient(#323232 32px, #3b3b3b 32px); }
.rb.is-hover { background: #4a4849; }
.styles { flex: 1; padding-left: 8px; gap: 2px; }
.style { width: 46px; height: 46px; margin-top: 2px; }
.style.is-on { background: #333; }
.style i { width: 36px; height: 36px; border-radius: 4px; }
.s1 i { background: #52ad77; } .s2 i { background: #486584; } .s3 i { background: #f7627f; } .s4 i { background: #ffcb57; }
.s5 i { background: #2ca0be; } .s6 i { background: #36c3c4; } .s7 i { background: #216892; }
.themes { display: flex; margin-left: auto; }
.stack { flex-direction: column; width: 96px; padding: 5px 0 0 11px; }
.stack button { justify-content: flex-start; gap: 4px; height: 25px; white-space: nowrap; }
.stack .caret { margin-left: -3px; }
.ribbon::after { content: ""; width: 200px; }

.work { display: flex; flex: 1; min-height: 0; }
.panel-head { display: flex; align-items: center; justify-content: space-between; height: 26px; padding-top: 2px; }
.panel-head h2 { font-size: 15px; line-height: 22px; padding-left: 7px; }
.panel-close { width: 24px; height: 23px; background: #43413e; color: #777; }

.library { display: flex; flex-direction: column; width: 304px; flex: none; }
.search { display: flex; height: 23px; margin-left: 2px; }
.search input { flex: 1; min-width: 0; background: #5f5f5f; border: 1px solid #3e3c3d; border-right: 0; padding: 0 4px; }
.search-drop { width: 16px; border: 1px solid #3e3c3d; background: #4a4849; }
.search-go { width: 26px; }
.lib-body { display: flex; flex: 1; min-height: 0; padding-top: 2px; }
.cats { display: flex; flex-direction: column; width: 40px; margin: 2px 4px 0 2px; }
.cats button { height: 33px; gap: 3px; padding-left: 7px; border-bottom: 1px solid #363444; }
.libs { display: flex; flex: 1; flex-direction: column; min-width: 0; padding-top: 4px; }
.lib { display: flex; flex: none; align-items: center; height: 25px; margin-top: 2px; padding: 0 5px 0 2px; background: #5e5e5e; }
.lib:first-child { margin-top: 0; }
.lib span { flex: 1; padding-left: 6px; }
.lib button { color: #fff; }
.shapes { display: flex; flex: 1; min-height: 0; justify-content: space-between; padding-top: 2px; overflow: hidden; }
.shape-grid { display: grid; grid-template-columns: repeat(3, 75px); grid-auto-rows: 75px; gap: 2px; padding: 2px 0 0 2px; min-height: 0; overflow: hidden; }
.shape-grid svg { width: 75px; height: 75px; fill: #52ad77; }
.shape-grid .is-on { background: #3b3b3b; }
.shape-grid .is-on svg { fill: #3a9c94; }
.lib-tabs { display: flex; height: 24px; padding: 0 0 1px 4px; white-space: nowrap; }
.lib-tabs button { padding: 0 11px; }
.lib-tabs .is-active { border: 1px solid #777; border-top: 0; padding: 0; width: 59px; }

.vbar { display: flex; flex-direction: column; width: 17px; background: #4c4a4b; }
.sb { flex: none; width: 17px; height: 17px; border: 1px solid #747474; background: #504e4f; }
.sb i { width: 0; height: 0; border: 5px solid transparent; }
.sb .up { border-bottom-color: #eee; border-top: 0; } .sb .down { border-top-color: #eee; border-bottom: 0; }
.sb .left { border-right-color: #eee; border-left: 0; } .sb .right { border-left-color: #eee; border-right: 0; }
.thumb { background: #565656; border: 1px solid #747474; }
.lib-thumb { height: 19px; margin-top: -1px; }
.fill { flex: 1; }

.editor { display: flex; flex: 1; flex-direction: column; min-width: 0; position: relative; border: solid #6a6a6a; border-width: 0 3px; background: #43413e; padding-left: 1px; }
.doc-tabs { display: flex; height: 26px; padding-top: 1px; }
.doc-tab { display: flex; align-items: center; width: 93px; gap: 3px; padding-left: 8px; border-right: 1px solid #666; background: #3b3a39; }
.doc-tab button { margin-left: 4px; color: #fff; }
.sheet { display: grid; flex: 1; min-height: 0; grid-template: 17px 1fr 17px / 18px 1fr 17px; }
.corner { border: 1px solid #777; background: #43413e; }
.ruler-h { width: 100%; height: 17px; background: #2d2d2d; }
.ruler-v { grid-area: 2 / 1; width: 18px; height: 100%; background: #2d2d2d; }
.ruler-h line, .ruler-v line { stroke: #777; }
.ruler-h text, .ruler-v text { fill: #858585; font: 10px "Open Sans", sans-serif; }
.stage { grid-area: 2 / 2; background: #fff; overflow: hidden; position: relative; }
.drawing { position: absolute; left: 230px; top: 9px; }
.sheet-v { grid-area: 1 / 3 / 3 / 4; }
.sheet-v .gap-a { flex: 152; } .sheet-v .thumb { flex: 145; } .sheet-v .gap-b { flex: 155; }
.hbar { grid-area: 3 / 1 / 4 / 3; display: flex; background: #504e4f; }
.hbar .gap-a { flex: 220; } .hbar .thumb { flex: 323; } .hbar .gap-b { flex: 227; }
.bar-corner { background: #5e5e5e; }
.pagebar { display: flex; align-items: center; height: 22px; padding-left: 6px; }
.pg-pick { display: grid; grid-template-columns: 1fr 15px; width: 124px; height: 18px; margin-left: 8px; align-items: center; border: solid #666; border-width: 0 1px; }
.pg-pick select { grid-area: 1 / 1 / 2 / 3; appearance: none; height: 18px; padding-left: 1px; background: linear-gradient(#504e4f, #504e4f) right / 17px 100% no-repeat; }
.pg-pick .caret { grid-area: 1 / 2; pointer-events: none; margin-left: 2px; }
.pg-add { margin-left: 8px; }
.pg-tab { margin-left: 24px; font-weight: 700; }
.palette { display: flex; height: 13px; background: #504e4f; line-height: 14px; overflow: hidden; padding-left: 1px; }
.palette span { width: 26px; }
.chips { display: flex; gap: 1px; height: 13px; }
.chips i { width: 6px; }

.floatbar { position: absolute; left: 510px; top: 14px; width: 33px; height: 241px; background: #f6f6f6; box-shadow: 0 0 2px #aaa; }
.floatbar button { height: 30px; width: 33px; padding-left: 5px; justify-content: flex-start; }
.floatbar button:first-child { height: 31px; padding-left: 6px; background: #fff; }
.floatbar .fl-close { height: 24px; padding-left: 8px; color: #555; }
.floatbar button:nth-child(6), .floatbar button:nth-child(7) { padding-left: 6px; }

.props { display: flex; flex-direction: column; width: 352px; flex: none; }
.props .panel-head { padding-right: 4px; }
.props .panel-head h2 { padding-left: 6px; }
.props-body { display: flex; flex: 1; min-height: 0; }
.side-icons { display: flex; flex-direction: column; width: 32px; gap: 15px; padding-left: 1px; border-right: 1px solid #3e3c3d; }
.side-icons button { width: 30px; height: 30px; }
.side-icons .is-on { background: #323232; padding-top: 3px; }
.form { flex: 1; padding: 15px 22px 0 12px; }
.row { display: flex; align-items: center; }
.combo { display: grid; grid-template-columns: 1fr 17px; align-items: center; height: 23px; width: 120px; }
.combo select { grid-area: 1 / 1 / 2 / 3; height: 23px; appearance: none; padding-left: 4px; border: 1px solid #3e3c3d; background: linear-gradient(#4a4849, #4a4849) right / 15px 100% no-repeat #5f5f5f; font: 12px "Noto Sans", sans-serif; }
.combo .caret { grid-area: 1 / 2; margin-left: 5px; pointer-events: none; }
.combo-font { flex: 1; }
.combo-size { width: 50px; margin-left: 6px; }
.formats { height: 30px; margin: 15px 0 14px; padding-left: 24px; }
.formats button { width: 30px; height: 30px; font: 700 13px "Liberation Serif", serif; }
.formats .f-i { font-style: italic; } .formats .f-u { text-decoration: underline; }
.formats .f-s { font: 11px "Liberation Sans", sans-serif; text-decoration: line-through; }
.formats .f-x { font: 700 13px "Liberation Sans", sans-serif; }
.formats sub, .formats sup { font-size: 7px; line-height: 7px; }
.formats sub { align-self: flex-end; padding-bottom: 7px; } .formats sup { align-self: flex-start; padding-top: 7px; }
.formats .f-a { font: 700 13px "Liberation Sans", sans-serif; }
.f-a i { align-self: flex-start; margin-top: 7px; border: 3px solid transparent; }
.f-a .tri-up { border-top: 0; border-bottom-color: #eee; } .f-a .tri-down { border-bottom: 0; border-top-color: #eee; }
.pair { justify-content: space-between; height: 33px; padding-bottom: 10px; }
.colors label { padding-bottom: 5px; }
.color { width: 120px; height: 23px; justify-content: flex-start; border: 1px solid #3e3c3d; box-shadow: inset 0 0 0 1px #777; padding-left: 5px; gap: 2px; }
.color i:first-child { width: 103px; height: 12px; }
.chip-white { background: #fff; } .chip-grey { background: #d9d9d9; }
.align { margin: 3px 0 0; padding: 7px 0 0; border: 0; min-width: 0; border-top: 1px dashed #3b393a; border-bottom: 1px dashed #3b393a; padding-bottom: 13px; }
.align legend { float: left; width: 100%; padding: 0; margin-bottom: 11px; line-height: 16px; }
.seg { display: flex; clear: both; gap: 1px; width: 260px; height: 23px; margin: 0 0 10px 13px; border: 1px solid #3e3c3d; background: #3e3c3d; }
.seg:last-child { margin-bottom: 0; }
.seg button { flex: 1; border: 1px solid #747474; background: #504e4f; }
.seg .is-on { background: #3b3b3b; padding-top: 2px; }
.seg .v-top { padding-bottom: 4px; } .seg .v-bottom { padding-top: 4px; }
.spacing { height: 23px; margin-top: 11px; padding: 0; }
.numbering { height: 77px; padding: 19px 0 8px; border-bottom: 1px dashed #3b393a; }
.bullet { width: 120px; height: 50px; justify-content: space-between; border: 1px solid #3e3c3d; box-shadow: inset 0 0 0 1px #777; padding: 0 4px 0 24px; }
.bullet b { width: 40px; height: 40px; background: #fff; color: #222; font: 13px/40px "Liberation Sans", sans-serif; }

.status { display: flex; align-items: center; flex: none; height: 31px; padding: 0 0 1px 13px; gap: 12px; background: #43413e; white-space: nowrap; }
.status a { color: #f0b93c; font: 12px/18px "Noto Sans", sans-serif; margin-right: -4px; }
.status code { font: 10px "Liberation Mono", monospace; white-space: pre; }
.zoom { display: flex; align-items: center; margin-left: auto; padding-right: 3px; }
.zoom button { width: 19px; height: 18px; }
.zoom .is-on { background: #333; }
.zoom .zm { width: 21px; }
.zoom input { width: 89px; height: 14px; margin: 0 1px; appearance: none; }
.zoom input::-webkit-slider-runnable-track { height: 2px; background: #777; }
.zoom input::-webkit-slider-thumb { appearance: none; width: 6px; height: 13px; margin-top: -6px; background: #fff; }
.pct { width: 64px; padding-left: 10px; font-size: 11px; position: relative; z-index: 2; }
.zoom .z-fit { margin-left: 6px; }
.grip { margin: 14px 0 0 8px; }

.notes { position: absolute; left: 0; top: 0; pointer-events: none; filter: drop-shadow(2px 3px 2px rgba(0, 0, 0, .6)); }
.mark { position: absolute; right: 0; bottom: 0; z-index: 1; display: flex; color: #f28a4b; pointer-events: none; }
.mark p { display: flex; flex-direction: column; padding-top: 4px; width: 84px; }
.mark b { font: 17px/20px "Noto Sans CJK SC", sans-serif; }
.mark span { font: 13px/18px "Noto Sans", sans-serif; }
```

FILE: app.js
```js
const NS = "http://www.w3.org/2000/svg";

function add(parent, name, attrs, text) {
  const el = document.createElementNS(NS, name);
  for (const key in attrs) el.setAttribute(key, attrs[key]);
  if (text !== undefined) el.textContent = text;
  parent.appendChild(el);
}

// Horizontal ruler: a labelled tick every 10 mm, a short one every 5 mm.
const rulerH = document.getElementById("ruler-h");
const width = rulerH.getBoundingClientRect().width;
function drawAcross() {
  for (let mm = 0; ; mm += 5) {
    const x = Math.round(mm * 3.77 - 4) + 0.5;
    if (x > width) break;
    const major = mm % 10 === 0;
    add(rulerH, "line", { x1: x, x2: x, y1: major ? 0 : 10, y2: 17 });
    if (major && x + 22 < width) add(rulerH, "text", { x: x + 2, y: 9 }, mm);
  }
  add(rulerH, "line", { x1: 0, x2: width, y1: 16.5, y2: 16.5 });
}
drawAcross();

// Vertical ruler, with its labels turned to read upwards.
const rulerV = document.getElementById("ruler-v");
const height = rulerV.getBoundingClientRect().height;
function drawDown() {
  for (let mm = 90; ; mm += 5) {
    const y = Math.round((mm - 90) * 3.78 + 12) + 0.5;
    if (y > height) break;
    const major = mm % 10 === 0;
    add(rulerV, "line", { y1: y, y2: y, x1: major ? 0 : 10, x2: 18 });
    if (major && y + 22 < height) add(rulerV, "text", { transform: `translate(10 ${y + 2}) rotate(-90)`, "text-anchor": "end" }, mm);
  }
  add(rulerV, "line", { x1: 17.5, x2: 17.5, y1: 0, y2: height });
}
drawDown();

const colors = `7d1128 a6192e c8102e ee4266 f7607d f9a0ac 1c5566 27808f 33a9c0 40c0dc 5edcf4 a0eefb
ff9c1b ffb612 ffc72c ffd059 ffd97b ffe49c 0f6e62 129680 18b8a0 20ccb0 63d9cb 85e6dd
6b2045 9b2c61 c74e8c e464a8 f88ac6 f0bdd8 4a6b12 5b8a13 7aa529 98bf27 b5d24d d3dd88
4b0082 6b4aa0 7e5bbc 9370db a48adc cdbdf2 a98a55 ceb07f eed202 ffe000 fff07c fdf6b0
006b68 009490 00b4b0 66c8c2 88d8d4 a0e6e2 5b2c55 7a3a6c 954b84 ad5b9c c878b4 d99bcb
205c34 2f8044 3ea055 52ad75 66bf88 8ed6a4 c64242 e84a4a fb5752 ff6464 ff7676 ff8f88
0c2958 123a80 1e4c9c 4468b4 6088cc 7ea0e4 592608 7a3200 9c3a00 b04524 d06040 e0775a
226892 2a82ba 3498dc 40a4f4 62b4f2 94d4fc 80746e 9c9088 c2baa8 d6d4c4 efe8da f6f3ec
465a78 527096 6488b0 7aaae0 000000 6c6c6c a0a0a0 c8cccc ececec ffffff`.split(/\s+/);
const chips = document.getElementById("chips");
for (const color of colors) {
  const chip = document.createElement("i");
  chip.style.background = "#" + color;
  chips.appendChild(chip);
}
```
